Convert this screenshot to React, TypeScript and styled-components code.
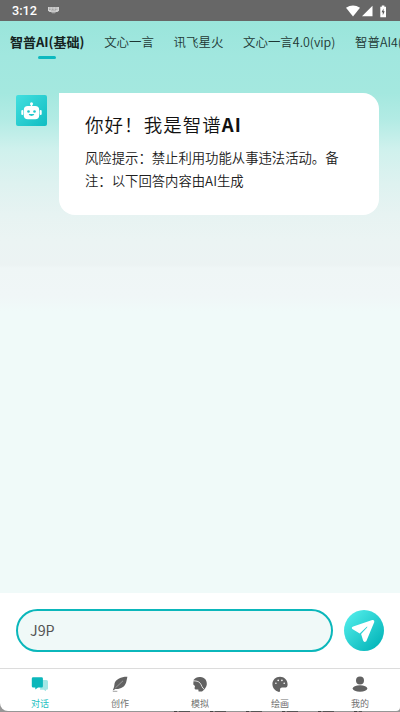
import React from "react";
import styled, { createGlobalStyle } from "styled-components";

const GlobalStyle = createGlobalStyle`
  * { box-sizing: border-box; }
  body { margin: 0; background: #969696; font-family: "Noto Sans CJK SC", sans-serif; }
`;

const Screen = styled.div`
  width: 400px;
  height: 712px;
  display: flex;
  flex-direction: column;
  overflow: hidden;
  background: #969696;
`;

const StatusBar = styled.header`
  flex: 0 0 21px;
  display: flex;
  align-items: center;
  padding: 1px 11px 0 12px;
  background: #676767;
  color: #fff;
`;

const Clock = styled.span`
  font: 500 12.7px/20px Roboto, sans-serif;
  width: 36px;
`;

const StatusIcons = styled.div`
  display: flex;
  align-items: center;
  gap: 2px;
  margin-left: auto;
`;

const Chat = styled.main`
  flex: 1;
  min-height: 0;
  background: linear-gradient(
    #9ae5db 0,
    #a1e7df 35px,
    #a4e8df 72px,
    #b2ebe4 98px,
    #cff1ed 128px,
    #def2f0 163px,
    #e7f3f2 194px,
    #ebf4f3 220px,
    #ecf3f3 244px,
    #eff6f6 247px,
    #f0f6f7 275px,
    #f0faf9 290px
  );
`;

const Tabs = styled.nav`
  display: flex;
  height: 41px;
  padding-left: 10px;
  gap: 19.7px;
  overflow: hidden;
  white-space: nowrap;
`;

const Tab = styled.div<{ $active?: boolean }>`
  flex: none;
  display: flex;
  flex-direction: column;
  align-items: center;
  padding-top: 11px;
  font-size: ${(p) => (p.$active ? "13px" : "12.45px")};
  font-weight: ${(p) => (p.$active ? 700 : 350)};
  line-height: 20px;
  color: ${(p) => (p.$active ? "#152321" : "#1d3633")};
`;

const Indicator = styled.span`
  width: 18px;
  height: 3px;
  margin-top: 4px;
  border-radius: 2px;
  background: #0cb9bf;
`;

const Message = styled.section`
  display: flex;
  align-items: flex-start;
  gap: 12px;
  padding: 31px 21px 0 16px;
`;

const Avatar = styled.div`
  width: 31px;
  height: 31px;
  margin-top: 2px;
  border-radius: 2px;
  background: linear-gradient(135deg, #43dfdf, #10bdc2);
`;

const Bubble = styled.article`
  width: 320px;
  height: 122px;
  padding: 18px 26px;
  border-radius: 0 16px 16px 16px;
  background: #fff;
  color: #202020;
`;

const Greeting = styled.h1`
  margin: 0;
  font-size: 18.5px;
  line-height: 26px;
  letter-spacing: 1.05px;
  font-weight: 350;
  white-space: nowrap;
  color: #111;
  b { font-weight: 700; }
`;

const Notice = styled.p`
  margin: 9px 0 0;
  font-size: 13.35px;
  font-weight: 350;
  line-height: 23.4px;
  white-space: nowrap;
`;

const Composer = styled.form`
  flex: 0 0 75px;
  display: flex;
  align-items: center;
  gap: 11px;
  padding: 0 16px;
  background: #fff;
`;

const Input = styled.input`
  width: 317px;
  height: 43px;
  padding: 0 12px 3px;
  border: 2px solid #0bb7bb;
  border-radius: 22px;
  outline: 0;
  background: #f0f9f8;
  color: #555;
  font: 400 14.3px "Noto Sans CJK SC", sans-serif;
`;

const SendButton = styled.button`
  width: 40px;
  height: 41px;
  padding: 0;
  border: 0;
  border-radius: 50%;
  background: linear-gradient(135deg, #4be8e6 15%, #08b8bc 85%);
`;

const BottomNav = styled.nav`
  flex: 0 0 43px;
  display: grid;
  grid-template-columns: repeat(5, 80px);
  border-top: 1px solid #dcdcdc;
  border-radius: 0 0 4px 8px;
  background: #fff;
`;

const NavItem = styled.div<{ $active?: boolean }>`
  display: flex;
  flex-direction: column;
  align-items: center;
  padding-top: 7px;
  color: ${(p) => (p.$active ? "#0bb7bb" : "#626262")};
  font-size: 9px;
  line-height: 12px;
  svg { display: block; margin-bottom: 5px; }
`;

const NavLabel = styled.span<{ $active?: boolean }>`
  color: ${(p) => (p.$active ? "#22bfc2" : "#707070")};
`;

const BottomEdge = styled.div`
  flex: 0 0 1px;
  background:
    repeating-linear-gradient(90deg, #444 0 3px, #888 3px 5px, #555 5px 16px, #969696 16px 36px) 174px 0 / 188px 1px no-repeat,
    #969696;
`;

const Keyboard = () => (
  <svg width="11" height="8" viewBox="0 0 11 8">
    <path d="M0 0h11v3.6L9.5 5H1.5L0 3.6z" fill="#d2d2d2" />
    <path d="M1 1h9M1 2.5h9" stroke="#828282" strokeWidth=".7" strokeDasharray=".8 .7" />
    <path d="M3 3.8h5" stroke="#999" strokeWidth=".6" />
    <path d="M3 5.3h5l-1 1H4z" fill="#bbb" />
  </svg>
);

const Robot = () => (
  <svg width="31" height="31" viewBox="0 0 31 31">
    <g fill="#fff">
      <circle cx="15.5" cy="8.7" r="1.5" />
      <path d="M14.8 8h1.4v4h-1.4z" />
      <rect x="7.8" y="11" width="15.4" height="13.3" rx="4" />
      <rect x="5.3" y="15" width="2" height="5" rx="1" />
      <rect x="23.7" y="15" width="2" height="5" rx="1" />
    </g>
    <g fill="#22c7cb">
      <circle cx="12.5" cy="16.5" r="1.3" />
      <circle cx="18.5" cy="16.5" r="1.3" />
      <path d="M12.7 19.1h5.6a2.8 1.8 0 0 1-5.6 0" />
    </g>
  </svg>
);

const Plane = () => (
  <svg width="40" height="41" viewBox="0 0 40 41">
    <path d="M28.2 10 9.2 16.4Q7 17.2 8.3 19l7.4 4.4 6.8-6.5q1.2-.8.6.5l-6 6.6 2 6.6q1 2.3 3.2.6L30.3 12q.3-2.5-2.1-2z" fill="#fff" />
  </svg>
);

const ChatIcon = () => (
  <svg width="18" height="17" viewBox="0 0 18 17">
    <path d="M10 4h5.5q1.5 0 1.5 1.5v7q0 1.3-1.5 1.3h-.5V15.3L12.7 13.8H9z" fill="#a2e7e5" />
    <path d="M2.2 1.3h8.4q1.3 0 1.3 1.3v7.6q0 1.4-1.3 1.4H7L4.3 13.5v-1.9H2.2Q.8 11.6.8 10.2V2.6q0-1.3 1.4-1.3z" fill="currentColor" />
  </svg>
);

const Feather = () => (
  <svg width="18" height="17" viewBox="0 0 18 17">
    <path d="M16.4.8C10.5.6 5 3.2 3.6 7.3l-.5 3.5L1.8 14.6l2.6-1.6c4.8.4 9.4-1.7 10.8-6.7z" fill="currentColor" />
    <path d="M4.3 12 12 4.8" stroke="#d5d5d5" strokeWidth=".5" fill="none" />
    <path d="M1.8 15.3h4.5" stroke="currentColor" strokeWidth=".6" />
  </svg>
);

const HeadIcon = () => (
  <svg width="18" height="17" viewBox="0 0 18 17">
    <path d="M2.5 4Q5 .6 9.4 1c4.4.3 6.8 3.5 6.4 7.5-.3 2.8-2 3.6-2.1 4.8L11 15.6H7.6l-.3-2.2H4.6q-1.2 0-1-1.4L4 10 2.3 8.6z" fill="currentColor" />
    <path d="M2 4.8c3 .1 5.5.3 7.2 2.4 1.6 2 1.5 4.6 4.3 6.3" stroke="#fff" strokeWidth=".8" fill="none" />
  </svg>
);

const Palette = () => (
  <svg width="18" height="17" viewBox="0 0 18 17">
    <path d="M9 .8C4.7.8 1.4 4 1.4 8.1S4.6 15.7 8 15.9q1.4 0 1.1-1.7c-.3-1.8.4-2.6 2.1-2.6h2.4q3 0 3-3.2C16.6 4.1 13.2.8 9 .8z" fill="currentColor" />
    <g fill="#fff">
      <circle cx="4.9" cy="7.2" r=".8" />
      <circle cx="7.2" cy="4.4" r=".8" />
      <circle cx="10.9" cy="4.4" r=".8" />
      <circle cx="13.2" cy="7.2" r=".8" />
    </g>
  </svg>
);

const Person = () => (
  <svg width="18" height="17" viewBox="0 0 18 17" fill="currentColor">
    <circle cx="9" cy="4.5" r="4" />
    <ellipse cx="9" cy="12.5" rx="7.3" ry="3.2" />
  </svg>
);

const models = ["文心一言", "讯飞星火", "文心一言4.0(vip)", "智普AI4("];
const destinations = [
  { label: "对话", Icon: ChatIcon },
  { label: "创作", Icon: Feather },
  { label: "模拟", Icon: HeadIcon },
  { label: "绘画", Icon: Palette },
  { label: "我的", Icon: Person },
];

export default function App() {
  return (
    <>
      <GlobalStyle />
      <Screen>
        <StatusBar>
          <Clock>3:12</Clock>
          <Keyboard />
          <StatusIcons>
            <svg width="14" height="12" viewBox="0 0 14 12"><path d="M0 2.8Q7-1.8 14 2.8L7 11.5z" fill="#fff" /></svg>
            <svg width="11" height="12" viewBox="0 0 11 12"><path d="M10.5.8v10.5H0z" fill="#fff" /></svg>
            <svg width="14" height="13" viewBox="0 0 14 13">
              <path d="M5.3 1.7h1.5V.5h2.6v1.2H11V12.3H5.3z" fill="#fff" />
              <path d="M8.5 3.5 6.6 7.3h1.2v3l1.9-4H8.5z" fill="#555" />
            </svg>
          </StatusIcons>
        </StatusBar>
        <Chat>
          <Tabs>
            <Tab $active>智普AI(基础)<Indicator /></Tab>
            {models.map((name) => <Tab key={name}>{name}</Tab>)}
          </Tabs>
          <Message>
            <Avatar><Robot /></Avatar>
            <Bubble>
              <Greeting>你好！我是智谱<b>AI</b></Greeting>
              <Notice>风险提示：禁止利用功能从事违法活动。备<br />注：以下回答内容由AI生成</Notice>
            </Bubble>
          </Message>
        </Chat>
        <Composer>
          <Input defaultValue="J9P" />
          <SendButton type="button" aria-label="发送"><Plane /></SendButton>
        </Composer>
        <BottomNav>
          {destinations.map(({ label, Icon }, i) => (
            <NavItem key={label} $active={i === 0}>
              <Icon />
              <NavLabel $active={i === 0}>{label}</NavLabel>
            </NavItem>
          ))}
        </BottomNav>
        <BottomEdge />
      </Screen>
    </>
  );
}
